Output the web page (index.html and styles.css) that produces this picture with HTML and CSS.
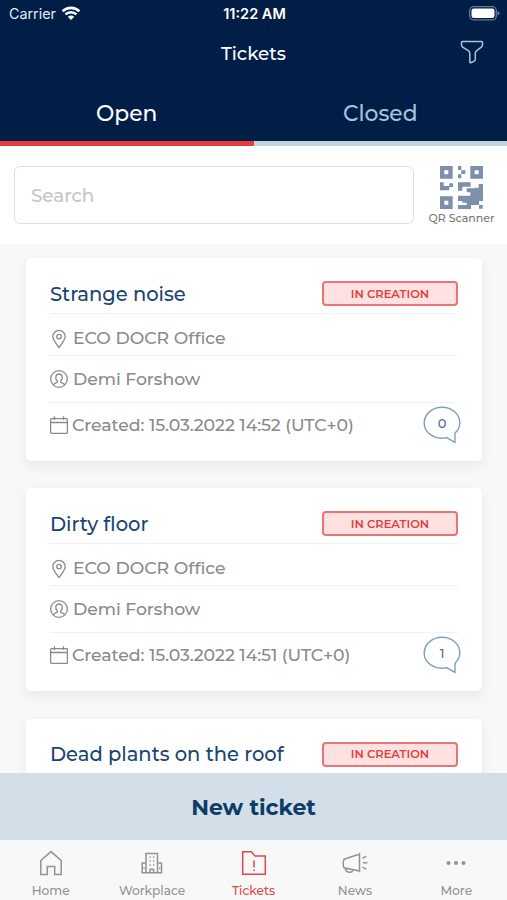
FILE: index.html
```html
<!DOCTYPE html>
<html lang="en">
<head>
<meta charset="utf-8">
<title>Tickets</title>
<link rel="stylesheet" href="styles.css">
</head>
<body>
<svg class="defs" aria-hidden="true">
  <symbol id="pin" viewBox="0 0 18 20"><path d="M9 18.500C6 14.500 2.800 11.200 2.800 7.600a6.200 6.200 0 0 1 12.400 0c0 3.600-3.200 6.900-6.200 10.900z"/><circle cx="9" cy="7.600" r="2.300"/></symbol>
  <symbol id="person" viewBox="0 0 18 18"><circle cx="9" cy="9" r="8.300"/><path d="M3.300 14.800c.8-1.500 2.500-1.700 3.700-2.300.6-.4.500-1.200 0-1.800-2.300-2.600-1.300-6.700 2-6.700s4.300 4.100 2 6.700c-.5.600-.6 1.400 0 1.800 1.200.6 2.900.8 3.700 2.300"/></symbol>
  <symbol id="calendar" viewBox="0 0 18 18"><path d="M1.500 2.600h15a.9.900 0 0 1 .9.900v12.900a.9.900 0 0 1-.9.900h-15a.9.900 0 0 1-.9-.9V3.500a.9.900 0 0 1 .9-.9zM.6 6.500h16.800M4.500.3v3.800M13.500.3v3.800"/></symbol>
  <symbol id="bubble" viewBox="0 0 38 38"><path d="M32 36.300 23.500 31.600C12 34.500 1.200 27 1.200 17.300 1.200 8.300 9 1.200 19 1.200s17.800 7.100 17.800 15.900c0 4-1.800 7.400-4.800 10.200z"/></symbol>
</svg>
<main class="app">
  <header class="header">
    <div class="status">
      <div class="carrier"><span>Carrier</span>
        <svg class="wifi" viewBox="0 0 20 15"><path d="M1.600 5.300a12 12 0 0 1 16.800 0M4.500 8.400a8 8 0 0 1 11 0"/><path class="solid" d="M10 14 6.800 10.700a4.600 4.600 0 0 1 6.400 0z"/></svg>
      </div>
      <span class="clock">11:22 AM</span>
      <svg class="battery" viewBox="0 0 31 15"><rect class="shell" x=".7" y=".7" width="26.600" height="13.200" rx="4"/><rect class="charge" x="2.500" y="2.500" width="23" height="9.600" rx="2.300"/><path class="tip" d="M28.500 5q2 .5 2 2.300t-2 2.300z"/></svg>
    </div>
    <div class="titlebar">
      <h1>Tickets</h1>
      <svg class="filter" viewBox="0 0 24 24"><path d="M2.300 1.500h19.400a.8.800 0 0 1 .8.800v2.400c0 1.200-.6 2-1.500 2.700l-4.300 3.300c-.9.700-1.400 1.500-1.400 2.600v6c0 .8-.3 1.400-1 1.800l-3.100 1.400c-.8.400-1.400 0-1.400-.8v-8.400c0-1.100-.5-1.900-1.400-2.600L3 7.400C2.100 6.700 1.500 5.900 1.500 4.700V2.300a.8.800 0 0 1 .8-.8z"/></svg>
    </div>
    <nav class="tabs">
      <span class="tab active">Open</span>
      <span class="tab">Closed</span>
    </nav>
  </header>
  <section class="search">
    <div class="field"><span>Search</span></div>
    <div class="qr">
      <svg viewBox="0 0 129 129"><path fill-rule="evenodd" d="M0 0h38v38H0zM13 13v12h12V13zM91 0h38v38H91zM104 13v12h12V13zM0 91h38v38H0zM13 104v12h12v-12z"/><path d="M54 0h10v12H54zM64 13h12v11H64zM54 25h10v12H54zM0 49h11v11h17v13H0zM28 52h11v11H28zM54 49h38v13H67v12H54zM116 54h13v51h-12v12H93v12H54v-12h26v-7H67v-5H54V89h37V79H80V67h24v-2h12zM117 117h11v11h-11z"/></svg>
      <span>QR Scanner</span>
    </div>
  </section>
  <section class="list">
    <article class="card">
      <div class="row head"><h2>Strange noise</h2><span class="badge">IN CREATION</span></div>
      <div class="row place"><svg class="pin"><use href="#pin"/></svg><span>ECO DOCR Office</span></div>
      <div class="row user"><svg><use href="#person"/></svg><span>Demi Forshow</span></div>
      <div class="row date"><svg><use href="#calendar"/></svg><span>Created: 15.03.2022 14:52 (UTC+0)</span><div class="count"><svg><use href="#bubble"/></svg><i>0</i></div></div>
    </article>
    <article class="card">
      <div class="row head"><h2>Dirty floor</h2><span class="badge">IN CREATION</span></div>
      <div class="row place"><svg class="pin"><use href="#pin"/></svg><span>ECO DOCR Office</span></div>
      <div class="row user"><svg><use href="#person"/></svg><span>Demi Forshow</span></div>
      <div class="row date"><svg><use href="#calendar"/></svg><span>Created: 15.03.2022 14:51 (UTC+0)</span><div class="count"><svg><use href="#bubble"/></svg><i>1</i></div></div>
    </article>
    <article class="card">
      <div class="row head"><h2>Dead plants on the roof</h2><span class="badge">IN CREATION</span></div>
    </article>
  </section>
  <div class="new"><span>New ticket</span></div>
  <nav class="bottom">
    <div class="item"><svg viewBox="0 0 26 26"><path d="M2.800 24.400V10.500L13 1.600l10.200 8.900v13.900h-6.500v-8h-7.400v8z"/></svg><span>Home</span></div>
    <div class="item"><svg viewBox="0 0 26 26"><path d="M7 22.800V3.500h11.500v19.300zM7 13H3.200v9.800H7M18.500 13h4v9.800h-4M11 22.500v-3.200h3.600v3.200M10.500 7.200h1.300M14 7.200h1.300M10.500 11h1.300M14 11h1.300M10.500 15h1.300M14 15h1.300M5 17.500v1.500M20.600 17.500v1.500"/></svg><span>Workplace</span></div>
    <div class="item on"><svg viewBox="0 0 26 26"><path d="M1.700 1.800h8.600l3.600 4.200h10.400v18.300H1.700z"/><path d="M13 10.600v7M13 19.400v1.600"/></svg><span>Tickets</span></div>
    <div class="item"><svg viewBox="0 0 26 26"><path d="M2 9.300 17.500 4v17L2 17.800c-1-2.500-1-6 0-8.500zM17.500 2.800v19.400M3.500 18.200c0 5 7 5.500 7.300 1.500M20.500 8.300l3.800-2.200M21 12.700h4.300M20.500 17.200l3.800 2.200"/></svg><span>News</span></div>
    <div class="item more"><svg viewBox="0 0 26 26"><circle cx="5.500" cy="13" r="2"/><circle cx="13" cy="13" r="2"/><circle cx="20.500" cy="13" r="2"/></svg><span>More</span></div>
  </nav>
</main>
</body>
</html>
```

FILE: styles.css
```css
* { box-sizing: border-box; }
body { margin: 0; font-family: Montserrat, Inter, sans-serif; font-weight: 500; }
h1, h2, i { margin: 0; font-size: inherit; font-weight: inherit; font-style: normal; }
svg { display: block; flex: none; fill: none; stroke: currentColor; }
span, h1, h2 { white-space: nowrap; }
.defs { position: absolute; width: 0; height: 0; }
.app { width: 507px; height: 900px; display: flex; flex-direction: column; overflow: hidden; background: #f8f8f9; }
.header { height: 146px; flex: none; background: #001e46; color: #fff; display: flex; flex-direction: column; }
.status { height: 27px; display: grid; grid-template-columns: 1fr auto 1fr; align-items: center; padding: 0 7px 0 9px; font-family: Inter, sans-serif; }
.carrier { display: flex; align-items: center; gap: 5px; font-size: 14.300px; font-weight: 400; color: #e4eaf2; }
.wifi { width: 20px; height: 15px; stroke: #fff; stroke-width: 2.600; }
.wifi .solid { fill: #fff; stroke: none; }
.clock { font-size: 14.500px; font-weight: 600; }
.battery { width: 31px; height: 15px; justify-self: end; stroke: none; }
.battery .shell { stroke: #66799a; stroke-width: 1.300; }
.battery .charge { fill: #fff; }
.battery .tip { fill: #66799a; }
.titlebar { height: 52px; display: grid; grid-template-columns: 1fr auto 1fr; align-items: center; padding: 0 23px; }
.titlebar h1 { grid-column: 2; font-size: 18.300px; }
.filter { width: 24px; height: 24px; justify-self: end; color: #a9c3dc; stroke-width: 1.500; margin-bottom: 2px; }
.tabs { flex: 1; display: flex; }
.tab { flex: 1; display: flex; align-items: center; justify-content: center; padding-top: 5px; font-size: 21.800px; color: #a9c3dc; border-bottom: 5px solid #c4d3e0; }
.tab.active { color: #fff; border-color: #e53b3f; }
.search { height: 98px; flex: none; display: flex; background: #fff; padding: 20px 12px 0 13.500px; justify-content: space-between; }
.field { width: 400px; height: 58px; border: 1.500px solid #dde1e3; border-radius: 6px; display: flex; align-items: center; padding: 1px 0 0 16.500px; font-size: 18.300px; color: #c4c5c7; }
.qr { display: flex; flex-direction: column; align-items: center; width: 67px; font-size: 11px; color: #777; }
.qr svg { width: 43px; height: 43px; fill: #7e8fab; stroke: none; margin-bottom: 2px; }
.list { flex: 1; min-height: 0; overflow: hidden; padding: 14px 25px 0 26px; display: flex; flex-direction: column; gap: 27.300px; }
.card { height: 203px; flex: none; border-radius: 5px; background: #fff; padding: 16px 24px 0; box-shadow: 0 5px 12px rgba(70, 100, 130, .1); }
.row { display: flex; align-items: center; border-bottom: 1px solid #f0f1f2; font-size: 17.300px; color: #8a8a8b; }
.row > svg { width: 18px; height: 18px; stroke-width: 1.300; }
.row .pin { height: 20px; }
.head { height: 40px; justify-content: space-between; font-size: 19.500px; color: #19456f; }
.badge { width: 136px; height: 25px; border: 2px solid #e87476; border-radius: 4px; background: #ffe1e1; color: #e0403f; font-size: 11.500px; font-weight: 600; display: flex; align-items: center; justify-content: center; }
.place { height: 42px; gap: 5px; padding-top: 8px; }
.user { height: 47px; gap: 5px; letter-spacing: -.06px; }
.place span, .user span { padding-bottom: 2px; }
.date { height: 45px; gap: 4px; border: 0; padding-bottom: 2px; letter-spacing: -.08px; }
.date > span { padding-bottom: 1px; }
.count { position: relative; width: 38px; height: 38px; margin-left: auto; margin-right: -3px; color: #7f9fbd; }
.count svg { width: 38px; height: 38px; stroke-width: 1.400; }
.count i { position: absolute; inset: 0 0 4px; display: flex; align-items: center; justify-content: center; font-size: 13px; font-weight: 500; color: #596c9b; }
.new { height: 67px; flex: none; background: #d2dee8; color: #0c3c67; font-size: 22px; font-weight: 700; display: flex; align-items: center; justify-content: center; padding-top: 1px; }
.bottom { height: 60px; flex: none; display: flex; background: #f8f8f9; color: #939394; }
.item { flex: 1; display: flex; flex-direction: column; align-items: center; padding-top: 10px; gap: 7px; font-size: 12.200px; }
.item svg { width: 26px; height: 26px; stroke-width: 1.500; }
.item.on { color: #e0474a; }
.more svg { fill: currentColor; stroke: none; }
```
